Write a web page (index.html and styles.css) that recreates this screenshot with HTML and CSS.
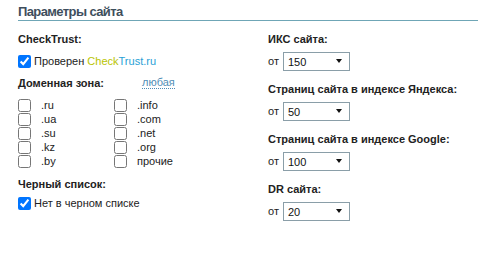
FILE: index.html
```html
<!DOCTYPE html>
<html lang="ru">
<head>
<meta charset="utf-8">
<title>Параметры сайта</title>
<link rel="stylesheet" href="styles.css">
</head>
<body>
<div class="panel">
  <h2 class="title">Параметры сайта</h2>
  <div class="cols">
    <div class="col">
      <div class="heading">CheckTrust:</div>
      <label class="check row1"><input type="checkbox" checked><span>Проверен <span class="ct-a">Check</span><span class="ct-b">Trust.ru</span></span></label>

      <div class="heading h-zone">Доменная зона: <a class="any" href="#">любая</a></div>
      <div class="zones">
        <label class="check"><input type="checkbox"><span>.ru</span></label>
        <label class="check"><input type="checkbox"><span>.info</span></label>
        <label class="check"><input type="checkbox"><span>.ua</span></label>
        <label class="check"><input type="checkbox"><span>.com</span></label>
        <label class="check"><input type="checkbox"><span>.su</span></label>
        <label class="check"><input type="checkbox"><span>.net</span></label>
        <label class="check"><input type="checkbox"><span>.kz</span></label>
        <label class="check"><input type="checkbox"><span>.org</span></label>
        <label class="check"><input type="checkbox"><span>.by</span></label>
        <label class="check"><input type="checkbox"><span>прочие</span></label>
      </div>

      <div class="heading h-black">Черный список:</div>
      <label class="check row2"><input type="checkbox" checked><span>Нет в черном списке</span></label>
    </div>

    <div class="col right">
      <div class="field">
        <div class="heading">ИКС сайта:</div>
        <div class="from">от <span class="sel"><select><option>150</option></select></span></div>
      </div>
      <div class="field">
        <div class="heading">Страниц сайта в индексе Яндекса:</div>
        <div class="from">от <span class="sel"><select><option>50</option></select></span></div>
      </div>
      <div class="field">
        <div class="heading">Страниц сайта в индексе Google:</div>
        <div class="from">от <span class="sel"><select><option>100</option></select></span></div>
      </div>
      <div class="field">
        <div class="heading">DR сайта:</div>
        <div class="from">от <span class="sel"><select><option>20</option></select></span></div>
      </div>
    </div>
  </div>
</div>
</body>
</html>
```

FILE: styles.css
```css
* { box-sizing: border-box; }
body {
  margin: 0;
  background: #fff;
  font-family: "Liberation Sans", Arial, sans-serif;
  font-size: 11px;
  color: #222;
}
.panel {
  width: 478px;
  padding: 4px 0 0 18px;
}
.title {
  margin: 0;
  font-size: 13px;
  line-height: 16px;
  font-weight: bold;
  letter-spacing: -0.6px;
  color: #3e4e5c;
  border-bottom: 1px solid #6fa6b6;
}
.cols {
  display: grid;
  grid-template-columns: 250px 1fr;
  padding-top: 11px;
}
.col { display: flex; flex-direction: column; }
.heading {
  font-weight: bold;
  font-size: 11px;
  line-height: 14px;
  color: #222;
}
.check {
  display: flex;
  align-items: center;
  height: 14px;
  line-height: 14px;
}
.check input {
  margin: 0;
  width: 13px;
  height: 13px;
  flex: none;
}
.row1 { margin-top: 8px; }
.row1 span { margin-left: 3px; }
.ct-a { color: #b9c400; margin-left: 0 !important; }
.ct-b { color: #2a9fd6; margin-left: 0 !important; }
.h-zone { margin-top: 8px; display: flex; }
.any {
  margin-left: 38px;
  font-weight: normal;
  color: #4f8db5;
  text-decoration: none;
  border-bottom: 1px dotted #4f8db5;
  line-height: 12px;
  height: 13px;
}
.zones {
  margin-top: 8px;
  display: grid;
  grid-template-columns: 96px 1fr;
}
.zones .check span { margin-left: 10px; }
.h-black { margin-top: 9px; }
.row2 { margin-top: 5px; }
.row2 span { margin-left: 3px; }

.field { display: flex; flex-direction: column; margin-bottom: 11px; }
.from {
  margin-top: 6px;
  display: flex;
  align-items: center;
  gap: 4px;
  line-height: 19px;
}
.sel {
  position: relative;
  display: inline-block;
  width: 67px;
  height: 19px;
}
.sel select {
  -webkit-appearance: none;
  appearance: none;
  width: 100%;
  height: 100%;
  border: 1px solid #8a9ea8;
  border-radius: 0;
  background: #fff;
  font-family: inherit;
  font-size: 11px;
  color: #111;
  padding: 0 0 0 4px;
  margin: 0;
}
.sel::after {
  content: "";
  position: absolute;
  right: 8px;
  top: 7px;
  border-left: 3.5px solid transparent;
  border-right: 3.5px solid transparent;
  border-top: 4px solid #111;
}
```
